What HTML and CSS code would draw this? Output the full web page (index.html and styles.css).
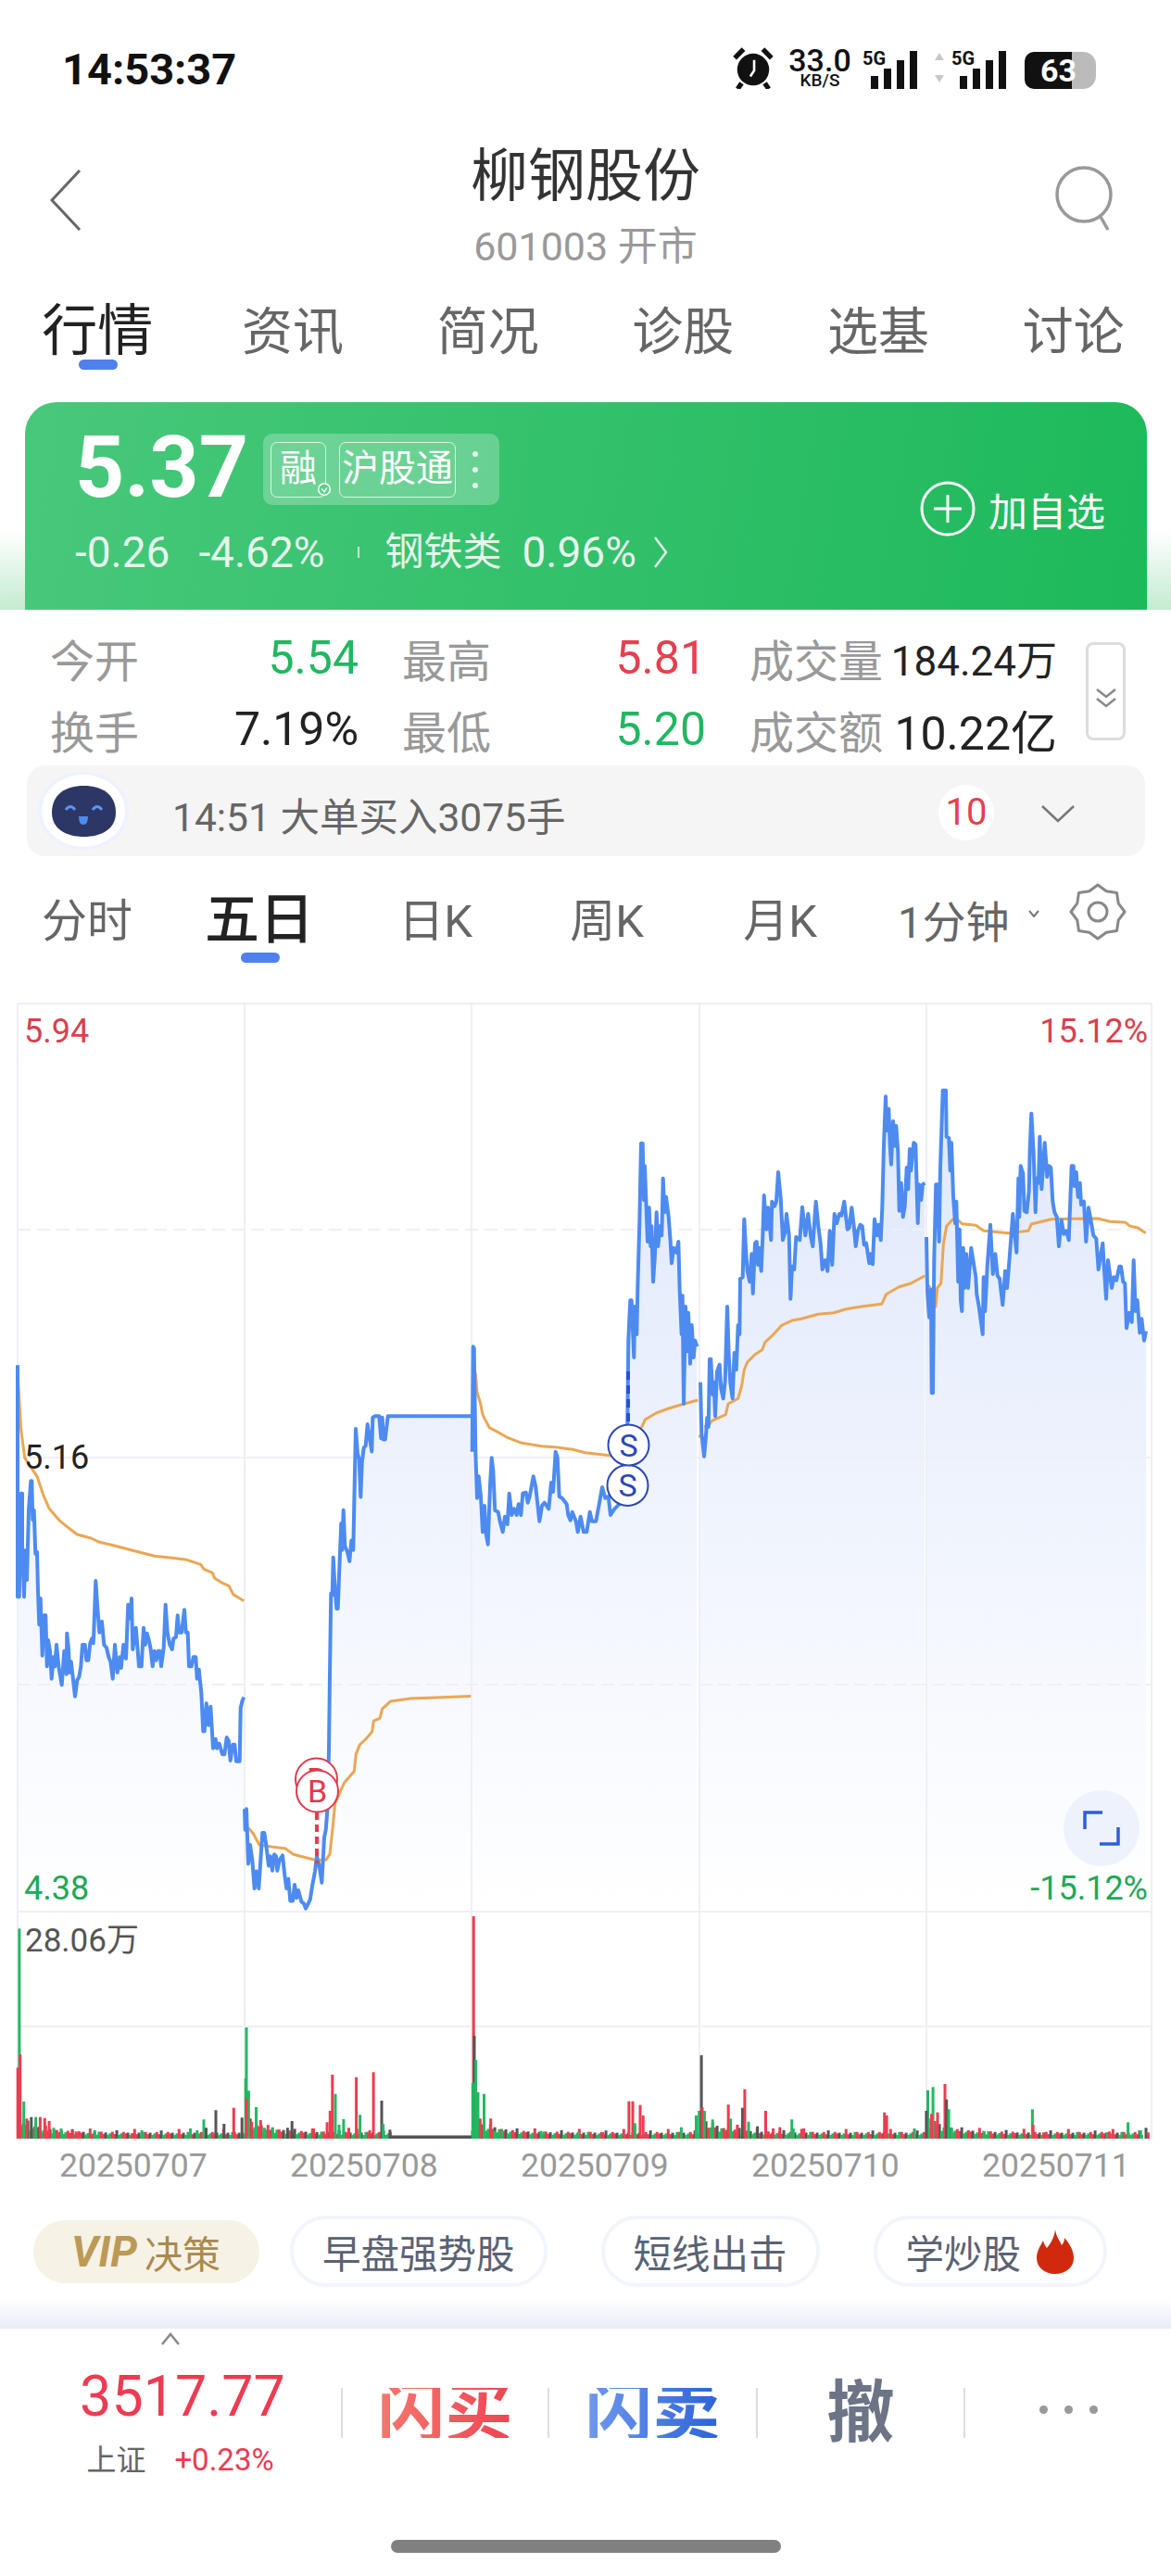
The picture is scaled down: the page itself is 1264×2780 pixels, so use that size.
FILE: index.html
```html
<!DOCTYPE html>
<html lang="zh-CN">
<head>
    <meta charset="UTF-8">
    <meta name="viewport" content="width=device-width, initial-scale=1.0">
    <title>柳钢股份</title>
    <link rel="stylesheet" href="styles.css">
</head>
<body>
<div class="page">
    <div class="status">
        <span class="clock">14:53:37</span>
        <div class="status-icons">
            <svg class="alarm" width="46" height="46" viewBox="0 0 44 44">
                <circle cx="22" cy="24" r="16.500" fill="#111"/>
                <path d="M3 12 L12 3 M41 12 L32 3 M10 38 L6 44 M34 38 L38 44" stroke="#111" stroke-width="5"/>
                <path d="M23 14 V25 L19 31" stroke="#fff" stroke-width="2.500" fill="none"/>
            </svg>
            <div class="speed"><b>33.0</b><small>KB/S</small></div>
            <div class="signal">
                <span class="net">5G</span>
                <svg width="52" height="42" viewBox="0 0 52 42"><path d="M2 28h8v14H2zM16 20h8v22h-8zM30 11h8v31h-8zM44 1h8v41h-8z" fill="#111"/></svg>
            </div>
            <div class="signal second">
                <svg class="arrows" width="12" height="38" viewBox="0 0 12 38"><path d="M6 3l5 8H1zM6 35l5-8H1z" fill="#c8c8c8"/></svg>
                <span class="net">5G</span>
                <svg width="52" height="42" viewBox="0 0 52 42"><path d="M2 28h8v14H2zM16 20h8v22h-8zM30 11h8v31h-8zM44 1h8v41h-8z" fill="#111"/></svg>
            </div>
            <div class="battery"><span>63</span></div>
        </div>
    </div>

    <div class="head">
        <svg class="back" width="34" height="66" viewBox="0 0 34 66"><path d="M32 1 L2 33 L32 65" fill="none" stroke="#666" stroke-width="3"/></svg>
        <div class="head-title">
            <h1>柳钢股份</h1>
            <p>601003 开市</p>
        </div>
        <svg class="search" width="66" height="72" viewBox="0 0 66 72"><circle cx="32" cy="32" r="29" fill="none" stroke="#999" stroke-width="3.500"/><path d="M50 56 L58 70" stroke="#999" stroke-width="3.500"/></svg>
    </div>

    <div class="tabs">
        <span class="tab active">行情</span>
        <span class="tab">资讯</span>
        <span class="tab">简况</span>
        <span class="tab">诊股</span>
        <span class="tab">选基</span>
        <span class="tab">讨论</span>
    </div>

    <div class="card-wrap">
        <div class="card">
            <div class="card-main">
                <div class="card-top">
                    <span class="price">5.37</span>
                    <div class="tags">
                        <span class="tag">融<svg class="tag-check" width="16" height="16" viewBox="0 0 14 14"><circle cx="7" cy="7" r="5.500" fill="#5fd08c" stroke="#fff" stroke-width="1.300"/><path d="M4.500 6.500L7 9.500 9.500 5.500" stroke="#fff" stroke-width="1.200" fill="none"/></svg></span>
                        <span class="tag">沪股通</span>
                        <span class="tag-dots"><i></i><i></i><i></i></span>
                    </div>
                </div>
                <div class="card-sub">
                    <span>-0.26</span>
                    <span class="pct">-4.62%</span>
                    <i class="card-sep"></i>
                    <span class="sector-name">钢铁类</span>
                    <span class="sector">0.96%</span>
                    <svg width="16" height="36" viewBox="0 0 16 36"><path d="M2 2 L14 18 L2 34" fill="none" stroke="#fff" stroke-opacity=".85" stroke-width="2.500"/></svg>
                </div>
            </div>
            <div class="add">
                <svg width="60" height="60" viewBox="0 0 60 60"><circle cx="30" cy="30" r="28" fill="none" stroke="#fff" stroke-width="3"/><path d="M30 15V45M15 30H45" stroke="#fff" stroke-width="3"/></svg>
                <span>加自选</span>
            </div>
        </div>
    </div>

    <div class="stats">
        <div class="stats-grid">
            <div class="stat"><span class="label">今开</span><span class="green">5.54</span></div>
            <div class="stat"><span class="label">最高</span><span class="red">5.81</span></div>
            <div class="stat"><span class="label">成交量</span><span class="small-val">184.24万</span></div>
            <div class="stat"><span class="label">换手</span><span>7.19%</span></div>
            <div class="stat"><span class="label">最低</span><span class="green">5.20</span></div>
            <div class="stat"><span class="label">成交额</span><span>10.22亿</span></div>
        </div>
        <div class="stats-more">
            <svg width="24" height="22" viewBox="0 0 24 22"><path d="M2 2l10 8 10-8M2 12l10 8 10-8" fill="none" stroke="#888" stroke-width="2.500"/></svg>
        </div>
    </div>

    <div class="news">
        <svg class="robot" width="100" height="84" viewBox="0 0 100 84">
            <ellipse cx="50" cy="42" rx="49" ry="42" fill="#eef2ff"/>
            <ellipse cx="50" cy="42" rx="45" ry="39" fill="#fff"/>
            <path d="M16 44C16 24 31 15 50.500 15S85 24 85 44C85 62 69 70 50.500 70S16 62 16 44z" fill="#2d3766"/>
            <path d="M31 41q5-7 10 0M60 41q5-7 10 0" fill="none" stroke="#5c93f5" stroke-width="3"/>
            <path d="M45 48h10q0 9-5 9t-5-9z" fill="#4d8bf0"/>
        </svg>
        <span class="news-text">14:51 大单买入3075手</span>
        <span class="news-count">10</span>
        <svg class="news-arrow" width="36" height="20" viewBox="0 0 36 20"><path d="M1 2 L18 18 L35 2" fill="none" stroke="#777" stroke-width="2.500"/></svg>
    </div>

    <div class="periods">
        <span class="period">分时</span>
        <span class="period active">五日</span>
        <span class="period">日K</span>
        <span class="period">周K</span>
        <span class="period">月K</span>
        <div class="period-last">
            <span class="period minute">1分钟</span>
            <svg class="period-caret" width="14" height="10" viewBox="0 0 14 10"><path d="M2 2l5 6 5-6" fill="none" stroke="#777" stroke-width="2"/></svg>
            <svg class="gear" width="64" height="62" viewBox="0 0 62 62">
                <polygon points="31,2 40.200,8.800 51.500,10.500 53.200,21.800 60,31 53.200,40.200 51.500,51.500 40.200,53.200 31,60 21.800,53.200 10.500,51.500 8.800,40.200 2,31 8.800,21.800 10.500,10.500 21.800,8.800" fill="none" stroke="#888" stroke-width="3" stroke-linejoin="round"/>
                <circle cx="31" cy="31" r="10" fill="none" stroke="#888" stroke-width="3"/>
            </svg>
        </div>
    </div>

    <div class="chart">
        <svg id="chart" width="1264" height="1250" viewBox="0 1060 1264 1250">
            <defs>
                <linearGradient id="area" gradientUnits="userSpaceOnUse" x1="0" y1="1180" x2="0" y2="2063">
                    <stop offset="0" stop-color="#dfe8fb"/>
                    <stop offset="1" stop-color="#ffffff"/>
                </linearGradient>
            </defs>
            <g id="fills"></g>
            <g class="grid">
                <path d="M19 1083V2308M264 1083V2308M509 1083V2308M755 1083V2308M1000 1083V2308M1243 1083V2308"/>
                <path d="M19 1083H1243M19 1573H1243M19 2063H1243M19 2187H1243"/>
                <path class="dash" d="M19 1327H1243M19 1818H1243"/>
            </g>
            <g id="bars"></g>
            <g id="lines"></g>
            <path class="drop-red" d="M342 1956V2011"/>
            <path class="drop-blue" d="M678 1480V1537"/>
            <g class="mark buy">
                <circle cx="341.500" cy="1920" r="22.500"/>
                <text x="341.500" y="1932">B</text>
                <circle cx="342.500" cy="1933" r="22.500"/>
                <text x="342.500" y="1945">B</text>
            </g>
            <g class="mark sell">
                <circle cx="677.500" cy="1603" r="22"/>
                <text x="677.500" y="1615">S</text>
                <circle cx="678.500" cy="1559.500" r="22"/>
                <text x="678.500" y="1571.500">S</text>
            </g>
        </svg>
        <span class="axis top-left red">5.94</span>
        <span class="axis top-right red">15.12%</span>
        <span class="axis mid-left">5.16</span>
        <span class="axis low-left green">4.38</span>
        <span class="axis low-right green">-15.12%</span>
        <span class="axis vol-max">28.06万</span>
        <div class="expand">
            <svg width="40" height="38" viewBox="0 0 40 38"><path d="M2 20V2H21M38 18V36H18" fill="none" stroke="#2f5fd7" stroke-width="3.500"/></svg>
        </div>
    </div>

    <div class="dates">
        <span>20250707</span>
        <span>20250708</span>
        <span>20250709</span>
        <span>20250710</span>
        <span>20250711</span>
    </div>

    <div class="chips">
        <span class="chip vip"><b>VIP</b> 决策</span>
        <span class="chip">早盘强势股</span>
        <span class="chip">短线出击</span>
        <span class="chip hot">学炒股
            <svg width="42" height="48" viewBox="0 0 42 48"><path d="M21 0c1 8 5 12 7 17 2-2 3-5 3-8 6 7 10 14 10 22 0 10-9 17-20 17S1 41 1 31c0-8 4-13 7-19 1 3 2 6 4 8 5-6 8-12 9-20z" fill="#cf2a0d"/></svg>
        </span>
    </div>
    <div class="shade"></div>

    <div class="bottom">
        <div class="quote-row">
            <div class="index">
                <svg class="index-caret" width="22" height="14" viewBox="0 0 22 14"><path d="M2 13L11 2l9 11" fill="none" stroke="#888" stroke-width="2.500"/></svg>
                <div class="index-val">3517.77</div>
                <div class="index-sub"><span>上证</span><span class="index-pct">+0.23%</span></div>
            </div>
            <div class="action"><b class="buy-text">闪买</b></div>
            <div class="action"><b class="sell-text">闪卖</b></div>
            <div class="action"><b class="cancel-text">撤</b></div>
            <div class="action"><span class="more"><i></i><i></i><i></i></span></div>
        </div>
        <div class="home"></div>
    </div>
</div>
<script src="chart.js"></script>
</body>
</html>
```

FILE: styles.css
```css
* {
    box-sizing: border-box;
}
body {
    margin: 0;
    background: #fff;
    color: #222;
    font-family: Roboto, "Noto Sans CJK SC", sans-serif;
}
.page {
    width: 1264px;
    height: 2780px;
    overflow: hidden;
}

/* status bar */
.status {
    height: 146px;
    display: flex;
    align-items: center;
    justify-content: space-between;
    padding: 2px 81px 0 67px;
}
.clock {
    font-size: 47px;
    font-weight: 700;
    color: #111;
}
.status-icons {
    display: flex;
    align-items: flex-end;
    height: 44px;
    color: #111;
}
.alarm {
    margin-right: 13px;
}
.speed {
    width: 72px;
    text-align: center;
    margin-right: 10px;
}
.speed b {
    display: block;
    font-size: 34px;
    font-weight: 500;
    line-height: 26px;
}
.speed small {
    display: block;
    font-size: 19px;
    font-weight: 500;
    line-height: 18px;
}
.signal {
    position: relative;
    width: 59px;
    height: 42px;
    display: flex;
    justify-content: flex-end;
}
.signal.second {
    margin-left: 37px;
}
.net {
    position: absolute;
    left: 0;
    top: -3px;
    font-size: 20px;
    font-weight: 700;
}
.arrows {
    position: absolute;
    left: -19px;
    top: 0;
}
.battery {
    width: 77px;
    height: 40px;
    margin-left: 20px;
    border-radius: 10px 14px 14px 10px;
    background: linear-gradient(90deg, #111 66%, #bbb 66%);
    color: #fff;
    font-size: 34px;
    font-weight: 700;
    line-height: 40px;
    padding-left: 17px;
}

/* header */
.head {
    height: 154px;
    display: grid;
    grid-template-columns: 1fr auto 1fr;
    align-items: start;
}
.back {
    margin: 37px 0 0 54px;
}
.search {
    justify-self: end;
    margin: 32px 60px 0 0;
}
.head-title {
    text-align: center;
}
.head-title h1 {
    margin: 0;
    padding-top: 3px;
    font-size: 62px;
    font-weight: 400;
    line-height: 84px;
    height: 87px;
    color: #333;
}
.head-title p {
    margin: 0;
    font-size: 43px;
    line-height: 67px;
    color: #999;
}

.tabs {
    height: 134px;
    display: grid;
    grid-template-columns: repeat(6, 1fr);
    align-items: start;
    padding-top: 21px;
}
.tab {
    position: relative;
    text-align: center;
    font-size: 55px;
    line-height: 74px;
    color: #666;
}
.tab.active {
    font-size: 60px;
    color: #222;
}
.tab.active::after {
    content: "";
    position: absolute;
    left: 85px;
    top: 67px;
    width: 42px;
    height: 11px;
    border-radius: 6px;
    background: #4f80ee;
}

/* green card */
.card-wrap {
    padding: 0 26px 0 27px;
    background: linear-gradient(180deg, #fff 62%, #c4ebd0 100%);
}
.card {
    height: 224px;
    display: flex;
    justify-content: space-between;
    border-radius: 34px 34px 0 0;
    background: linear-gradient(100deg, #48c87b, #1db95a);
    color: #fff;
    padding: 22px 45px 0 54px;
}
.card-top {
    display: flex;
    align-items: flex-start;
}
.price {
    font-size: 93px;
    font-weight: 700;
    line-height: 98px;
    width: 203px;
}
.tags {
    display: flex;
    align-items: center;
    gap: 14px;
    height: 77px;
    margin-top: 12px;
    padding: 0 23px 0 8px;
    border-radius: 10px;
    background: rgba(255, 255, 255, .25);
}
.tag {
    position: relative;
    height: 60px;
    padding: 0 2px;
    border: 1.500px solid rgba(255, 255, 255, .75);
    border-radius: 7px;
    font-size: 40px;
    line-height: 56px;
    min-width: 60px;
    text-align: center;
}
.tag-check {
    position: absolute;
    right: -7px;
    bottom: 0;
}
.tag-dots {
    display: flex;
    flex-direction: column;
    gap: 11px;
    margin-left: 4px;
}
.tag-dots i {
    width: 6px;
    height: 6px;
    border-radius: 50%;
    background: rgba(255, 255, 255, .8);
}
.card-sub {
    display: flex;
    align-items: center;
    margin-top: 17px;
    font-size: 46px;
    line-height: 50px;
    color: rgba(255, 255, 255, .88);
}
.pct {
    margin-left: 31px;
}
.card-sep {
    width: 2px;
    height: 12px;
    margin: 0 28px 0 35px;
    background: rgba(255, 255, 255, .7);
}
.sector-name {
    font-size: 42px;
}
.sector {
    margin: 0 18px 0 22px;
}
.add {
    display: flex;
    align-items: center;
    gap: 14px;
    height: 60px;
    margin-top: 63px;
    font-size: 42px;
}

/* quote table */
.stats {
    height: 168px;
    display: flex;
    padding: 13px 0 0 54px;
}
.stats-grid {
    width: 1086px;
    display: grid;
    grid-template-columns: 333px 328px 332px;
    grid-auto-rows: 77px;
    column-gap: 47px;
    font-size: 50px;
}
.stat {
    display: flex;
    align-items: center;
    justify-content: space-between;
}
.label {
    font-size: 48px;
    color: #999;
}
.small-val {
    font-size: 44px;
}
.green {
    color: #21b760;
}
.red {
    color: #e5404f;
}
.stats-more {
    width: 43px;
    height: 106px;
    margin: 22px 0 0 32px;
    border: 3px solid #ddd;
    border-radius: 8px;
    display: flex;
    align-items: center;
    justify-content: center;
    padding-top: 14px;
}

/* news strip */
.news {
    height: 98px;
    margin: 0 28px 0 29px;
    display: flex;
    align-items: center;
    border-radius: 20px;
    background: #f5f5f5;
}
.robot {
    margin-left: 11px;
}
.news-text {
    margin: 6px 0 0 46px;
    font-size: 42.500px;
    color: #666;
}
.news-count {
    width: 60px;
    height: 60px;
    margin: 4px 0 0 auto;
    border-radius: 50%;
    background: #fff;
    color: #e5404f;
    font-size: 40px;
    line-height: 60px;
    text-align: center;
}
.news-arrow {
    margin: 6px 76px 0 51px;
}

/* period tabs */
.periods {
    height: 136px;
    display: grid;
    grid-template-columns: 188px 178px 208px 162px 212px 1fr;
    align-items: center;
}
.period {
    position: relative;
    text-align: center;
    font-size: 49px;
    color: #666;
    top: -3px;
}
.period.minute {
    font-size: 47px;
    top: -1px;
}
.period.active {
    left: 3px;
    font-size: 59px;
    font-weight: 500;
    color: #222;
    top: -5px;
}
.period.active::after {
    content: "";
    position: absolute;
    left: 69px;
    top: 83px;
    width: 42px;
    height: 11px;
    border-radius: 6px;
    background: #4f80ee;
}
.period-last {
    display: flex;
    align-items: center;
    padding-left: 21px;
}
.period-caret {
    margin: -12px 0 0 20px;
}
.gear {
    margin: -16px 0 0 30px;
}

/* chart */
.chart {
    position: relative;
    height: 1250px;
}
#chart {
    display: block;
}
.grid path {
    fill: none;
    stroke: #eef0f5;
    stroke-width: 2;
}
.grid .dash {
    stroke-dasharray: 14 7;
}
.price-line {
    fill: none;
    stroke: #4d8bf0;
    stroke-width: 4;
    stroke-linejoin: round;
}
.avg-line {
    fill: none;
    stroke: #eba654;
    stroke-width: 3;
    stroke-linejoin: round;
}
.drop-red {
    stroke: #e63a50;
    stroke-width: 4;
    stroke-dasharray: 8 5;
}
.drop-blue {
    stroke: #2a4fd6;
    stroke-width: 4;
    stroke-dasharray: 9 6;
}
.mark circle {
    fill: #fff;
    stroke-width: 2;
}
.mark text {
    font-size: 34px;
    text-anchor: middle;
}
.buy circle {
    stroke: #e0394e;
}
.buy text {
    fill: #e0394e;
}
.sell circle {
    stroke: #2b47b8;
}
.sell text {
    fill: #2b47b8;
}
.axis {
    position: absolute;
    font-size: 36px;
    line-height: 40px;
    color: #222;
}
.axis.red {
    color: #d9404c;
}
.axis.green {
    color: #21a855;
}
.top-left {
    left: 26px;
    top: 33px;
}
.top-right {
    right: 25px;
    top: 33px;
}
.mid-left {
    left: 26px;
    top: 493px;
}
.low-left {
    left: 26px;
    top: 958px;
}
.low-right {
    right: 25px;
    top: 958px;
}
.axis.vol-max {
    left: 27px;
    top: 1015px;
    font-size: 35px;
    color: #555;
}
.expand {
    position: absolute;
    left: 1148px;
    top: 872px;
    width: 82px;
    height: 82px;
    border-radius: 50%;
    background: #eef2fc;
    display: flex;
    align-items: center;
    justify-content: center;
}

.dates {
    height: 55px;
    display: grid;
    grid-template-columns: repeat(5, 249px);
    padding-left: 64px;
    font-size: 35.500px;
    line-height: 55px;
    color: #999;
}

/* chips */
.chips {
    height: 115px;
    display: flex;
    align-items: center;
    gap: 58px;
    padding: 14px 0 0 36px;
}
.chip {
    height: 77px;
    padding: 0 31px;
    display: flex;
    align-items: center;
    border: 4px solid #f2f5fb;
    border-radius: 39px;
    font-size: 41.500px;
    color: #5a6273;
    white-space: nowrap;
}
.chip.vip {
    height: 68px;
    width: 244px;
    margin-right: -25px;
    padding: 0 0 0 41px;
    gap: 8px;
    border: 0;
    background: #f7f2e6;
    color: #a98a4f;
    font-size: 41px;
}
.vip b {
    font-style: italic;
    color: #bb9a56;
    font-size: 46px;
}
.chip.hot {
    gap: 16px;
    padding-right: 31px;
}
.shade {
    height: 33px;
    background: linear-gradient(180deg, #fff, #e8ecf5);
}

/* bottom bar */
.bottom {
    height: 267px;
}
.quote-row {
    height: 228px;
    display: grid;
    grid-template-columns: 368px 223px 225px 224px 1fr;
}
.index {
    position: relative;
    padding: 38px 0 0 26px;
    text-align: center;
}
.index-caret {
    position: absolute;
    left: 173px;
    top: 4px;
}
.index-val {
    font-size: 61px;
    line-height: 70px;
    color: #ee3b52;
}
.index-sub {
    display: flex;
    justify-content: center;
    align-items: baseline;
    gap: 31px;
    margin-left: -5px;
    font-size: 32px;
    line-height: 68px;
    color: #666;
}
.index-pct {
    font-size: 33px;
    color: #ee3b52;
}
.action {
    height: 54px;
    margin-top: 64px;
    display: flex;
    align-items: center;
    justify-content: center;
    border-left: 2px solid #ddd;
    font-size: 73px;
    line-height: 54px;
}
.buy-text {
    background: linear-gradient(90deg, #f4786e, #ee4453);
    -webkit-background-clip: text;
    background-clip: text;
    color: transparent;
}
.sell-text {
    background: linear-gradient(90deg, #7099ee, #2c62d8);
    -webkit-background-clip: text;
    background-clip: text;
    color: transparent;
}
.cancel-text {
    color: #6c7486;
}
.more {
    display: flex;
    gap: 18px;
    margin-top: -8px;
}
.more i {
    width: 9px;
    height: 9px;
    border-radius: 50%;
    background: #999;
}
.home {
    width: 421px;
    height: 14px;
    margin-left: 422px;
    border-radius: 7px;
    background: #808080;
}
```

FILE: chart.js
```js
// price and average lines were read off crops of the chart, one crop per day.
// each day: crop origin, crop y scale (3 unless given), then flat x,y pairs
var days = [
    {
        x: 10, y: 1460,
        price: [27,40,27,790,32,790,38,455,42,455,42,620,48,790,52,640,57,735,63,510,70,415,73,415,76,540,80,510,85,650,90,645,93,770,97,880,101,795,107,980,112,850,118,850,122,1015,126,930,132,965,137,1055,143,985,148,1015,153,945,160,1015,170,1075,178,965,185,1040,187,908,192,960,195,1035,200,1000,205,1040,213,1112,220,1060,226,1050,232,1015,237,945,245,945,250,995,256,995,262,940,268,925,272,940,274,905,280,738,285,815,292,905,300,870,307,945,315,955,322,985,328,1000,335,1055,342,945,350,1035,358,985,362,1020,370,945,378,990,385,815,392,860,396,795,400,960,410,890,416,965,420,1015,428,1015,435,890,440,945,446,908,452,930,458,960,464,1015,470,965,476,995,482,965,487,965,492,1015,500,955,506,815,512,905,520,945,527,960,532,925,540,920,545,850,550,905,558,905,567,832,572,905,578,905,582,1015,590,1015,596,985,604,985,608,1055,614,1025,622,1100,628,1225,632,1225,638,1135,645,1205,652,1145,660,1280,668,1250,672,1280,680,1265,690,1300,697,1300,704,1245,710,1255,716,1320,724,1268,730,1268,735,1322,746,1322,749,1150,755,1125,760,1115],
        avg: [[27,60,38,250,50,340,70,370,90,400,110,460,130,505,165,545,190,565,220,588,265,600,290,612,340,624,400,640,470,658,520,663,575,670,620,685,630,700,658,712,665,730,690,745,712,755,725,782,760,803]]
    },
    {
        x: 260, y: 1440, sy: 2.45,
        price: [12,1255,14,1310,18,1255,24,1400,30,1350,37,1390,44,1465,50,1420,58,1465,65,1375,70,1318,76,1318,82,1350,90,1405,95,1380,102,1418,108,1375,114,1380,118,1418,125,1390,135,1378,142,1430,148,1465,154,1440,160,1498,168,1498,174,1455,180,1490,186,1470,196,1500,204,1505,210,1518,218,1505,224,1495,232,1455,240,1420,246,1380,255,1410,262,1450,270,1330,275,1310,280,1260,285,1100,288,900,292,685,296,690,299,590,304,660,310,725,314,725,318,640,325,500,328,570,332,465,337,560,345,575,352,600,358,545,364,570,368,400,372,250,378,315,383,330,388,430,392,340,398,300,404,295,410,238,416,270,424,310,427,220,435,216,448,216,454,275,458,220,461,278,467,278,476,216,745,216],
        avg: [[25,1305,40,1320,60,1350,100,1355,145,1360,170,1375,240,1390,275,1390,288,1375,298,1300,305,1240,335,1185,367,1155,373,1110,385,1085,405,1070,425,1050,430,1022,450,1015,458,990,485,970,550,963,650,960,745,957]]
    },
    {
        x: 505, y: 1220,
        price: [14,1040,17,700,20,705,25,1040,30,1190,35,1120,42,1185,48,1300,54,1215,58,1300,65,1340,72,1150,77,1060,82,1100,88,1230,98,1235,105,1270,113,1300,120,1250,128,1275,134,1175,142,1245,150,1225,158,1245,164,1210,172,1245,178,1175,188,1172,194,1205,200,1185,212,1120,220,1155,232,1265,240,1215,248,1205,262,1225,270,1140,276,1170,284,1040,290,1060,296,1185,305,1190,320,1210,325,1245,332,1262,338,1235,350,1265,356,1300,365,1250,375,1300,385,1300,395,1235,402,1265,415,1265,425,1210,435,1155,445,1190,455,1185,462,1245,475,1225,490,1210,517,950,520,680,526,550,530,550,538,735,541,570,547,660,550,510,556,300,561,42,566,42,570,225,573,115,577,220,582,360,587,250,592,375,595,310,600,490,606,400,611,265,616,375,622,310,628,340,632,155,637,265,642,215,650,280,656,360,660,430,666,380,675,395,682,360,686,520,692,660,695,535,699,885,705,570,708,715,714,590,720,755,725,630,731,735,736,680,742,700],
        avg: [[25,785,30,850,40,880,48,920,58,940,70,962,100,978,130,995,175,1012,240,1022,290,1026,340,1033,380,1043,420,1048,460,1052,563,960,575,935,610,915,650,900,700,885,745,873]]
    },
    {
        x: 750, y: 1170,
        price: [18,965,22,1130,30,1205,35,1150,40,1080,44,1110,48,890,52,890,58,1005,62,965,66,1075,72,930,80,908,85,985,92,1018,98,960,105,720,110,880,115,965,122,1018,128,870,134,925,140,780,145,810,147,630,155,625,160,437,165,530,170,605,178,640,184,550,188,678,195,515,200,510,205,585,208,530,215,605,220,490,224,360,232,470,237,400,247,505,250,380,258,395,264,380,270,285,278,370,285,505,292,480,297,420,305,490,310,695,315,590,322,600,328,495,340,505,348,398,358,490,367,420,375,490,382,525,392,380,400,460,407,515,413,600,422,570,430,605,437,475,445,585,452,420,460,450,468,420,475,425,484,380,494,470,500,465,508,400,515,460,521,525,528,475,536,455,542,460,548,520,555,515,565,580,570,550,576,583,582,437,590,490,595,455,602,505,607,400,612,200,618,40,622,150,628,80,632,200,636,260,642,120,648,200,652,135,658,220,662,410,668,320,674,430,680,395,686,270,691,340,696,210,700,280,709,190,715,195,722,450,726,325,733,375,738,325,745,320],
        avg: [[12,1140,20,1140],[30,1110,45,1105,55,1090,100,1070,108,1035,140,1018,152,975,160,925,170,900,195,875,218,860,228,835,250,815,280,782,315,765,345,760,400,745,450,740,490,728,540,720,605,712,620,680,660,657,700,645,745,620]]
    },
    {
        x: 995, y: 1160,
        price: [15,525,18,700,24,785,30,695,32,1030,36,1030,40,600,46,355,50,355,56,540,60,300,68,50,78,50,80,200,88,205,92,310,96,220,102,395,108,480,112,410,118,670,122,500,126,730,130,765,134,560,138,690,144,580,150,690,160,560,175,655,178,710,185,750,197,840,200,655,205,765,212,620,222,485,230,645,238,580,245,650,252,660,262,745,270,635,276,690,282,620,295,450,300,510,307,575,313,335,316,460,320,295,328,320,332,440,340,445,347,375,350,240,355,125,362,255,368,445,372,335,378,350,382,200,388,370,398,220,406,330,412,295,418,300,424,410,430,445,437,460,444,555,452,470,460,515,468,505,476,535,485,295,491,295,494,360,500,315,506,395,512,350,516,420,525,410,532,540,540,430,548,475,556,520,565,530,572,630,580,580,586,545,590,620,597,725,603,600,615,690,622,655,630,665,640,620,645,620,652,670,658,675,663,820,672,770,680,800,686,600,692,765,698,730,706,835,712,790,720,860,726,830],
        avg: [[20,680,28,690,45,750,50,690,62,675,70,550,80,490,100,468,115,468,130,482,175,487,200,505,280,512,345,505,355,483,420,467,500,466,570,465,610,475,660,478,675,490,700,495,725,512]]
    }
];

// volume spikes, x and top read off a crop at 1.24x / 3x: [x, top, colour]
var spikes = [
    [24,65,'g'],[25,472,'r'],[22,515,'r'],[30,625,'g'],[34,680,'r'],[40,675,'k'],[46,675,'g'],[52,675,'r'],[58,678,'r'],[64,688,'r'],[70,710,'g'],[80,712,'g'],[95,718,'r'],[100,722,'r'],[125,718,'g'],[188,718,'g'],[175,728,'r'],[222,730,'r'],[253,712,'g'],[262,718,'g'],[271,683,'g'],[274,710,'k'],[287,653,'k'],[298,697,'k'],[311,645,'r'],[322,677,'k'],[328,385,'g'],[327,550,'g'],[331,590,'g'],[328,615,'r'],[335,690,'r'],[341,643,'g'],[347,685,'r'],[352,710,'g'],[363,708,'g'],[383,710,'k'],[389,688,'k'],[418,712,'r'],[436,692,'r'],[440,655,'r'],[443,538,'r'],[447,600,'g'],[452,700,'g'],[458,682,'g'],[465,710,'r'],[475,546,'r'],[480,668,'g'],[493,718,'r'],[498,530,'r'],[509,622,'k'],[511,697,'g'],[520,716,'k'],
    [632,25,'r'],[633,412,'k'],[635,490,'g'],[631,565,'g'],[638,595,'g'],[646,600,'g'],[641,680,'r'],[655,680,'r'],[660,720,'g'],[670,718,'g'],[722,720,'g'],[772,724,'g'],[805,724,'r'],[840,624,'r'],[845,624,'r'],[848,695,'g'],[855,636,'r'],[859,670,'r'],[910,708,'g'],[930,670,'g'],[934,655,'g'],[937,475,'k'],[938,643,'r'],[941,655,'g'],[946,710,'r'],[952,683,'g'],[973,635,'r'],[976,680,'g'],[985,700,'r'],[992,645,'k'],[995,585,'r'],[1000,690,'g'],[1012,705,'k'],[1023,655,'r'],[1033,712,'r'],[1042,708,'r'],[1058,683,'g'],[1060,712,'g'],[1074,712,'r'],
    [1182,660,'r'],[1185,670,'r'],[1222,712,'g'],[1240,588,'g'],[1238,655,'k'],[1247,578,'g'],[1245,665,'r'],[1253,660,'r'],[1263,568,'r'],[1265,618,'k'],[1268,650,'g'],[1272,710,'g'],[1315,720,'g'],[1355,728,'r'],[1380,650,'g'],[1381,700,'r'],[1395,725,'r'],[1480,725,'g'],[1483,722,'r'],[1508,692,'g'],[1525,718,'g'],[1532,710,'k'],[1535,725,'r']
];

var colours = { g: '#23b861', r: '#ef3b50', k: '#555' };
var ns = 'http://www.w3.org/2000/svg';
var fills = document.getElementById('fills');
var lines = document.getElementById('lines');
var bars = document.getElementById('bars');

function add(parent, tag, attrs) {
    var el = document.createElementNS(ns, tag);
    for (var key in attrs) {
        el.setAttribute(key, attrs[key]);
    }
    parent.appendChild(el);
    return el;
}

function toPage(day, list) {
    var out = [];
    var sy = day.sy || 3;
    for (var i = 0; i < list.length; i += 2) {
        out.push((day.x + list[i] / 3).toFixed(1) + ',' + (day.y + list[i + 1] / sy).toFixed(1));
    }
    return out;
}

days.forEach(function (day) {
    var pts = toPage(day, day.price);
    var first = pts[0].split(',')[0];
    var last = pts[pts.length - 1].split(',')[0];
    var area = pts.concat([last + ',2063', first + ',2063']);
    add(fills, 'polygon', { points: area.join(' '), fill: 'url(#area)' });
    day.avg.forEach(function (part) {
        add(lines, 'polyline', { points: toPage(day, part).join(' '), 'class': 'avg-line' });
    });
    add(lines, 'polyline', { points: pts.join(' '), 'class': 'price-line' });
});

function bar(x, height, colour, width) {
    add(bars, 'rect', { x: x.toFixed(1), y: (2308 - height).toFixed(1), width: width || 3, height: height, fill: colour });
}

// small bars along the axis, busier just after each open
var opens = [19, 264, 509, 755, 1000];
var keys = ['g', 'r', 'k', 'g', 'r'];
for (var i = 0; i < 506; i++) {
    var x = 19 + i * 2.4;
    if (x > 422 && x < 508) {
        continue;
    }
    var lift = 0;
    opens.forEach(function (open) {
        if (x >= open) {
            lift = Math.max(lift, 16 * Math.exp((open - x) / 24));
        }
    });
    var h = 4 + (i * 7) % 5 * ((i * 3) % 4 === 0 ? 1.6 : .8);
    bar(x, h + lift * (.5 + (i * 11) % 5 * .12), colours[keys[(i * 13) % 5]]);
}

// the no-trade stretch on day two is one flat block
bar(422, 3.5, colours.k, 87);

spikes.forEach(function (s) {
    bar(s[0] / 1.24, (745 - s[1]) / 3, colours[s[2]]);
});
```
